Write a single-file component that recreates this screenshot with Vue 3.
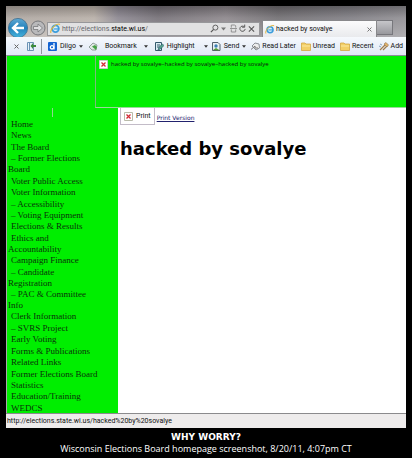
<script setup>
const menu = [
  'Home', 'News', 'The Board', '– Former Elections Board', 'Voter Public Access',
  'Voter Information', '– Accessibility', '– Voting Equipment', 'Elections & Results',
  'Ethics and Accountability', 'Campaign Finance', '– Candidate Registration',
  '– PAC & Committee Info', 'Clerk Information', '– SVRS Project', 'Early Voting',
  'Forms & Publications', 'Related Links', 'Former Elections Board', 'Statistics',
  'Education/Training', 'WEDCS',
]
</script>

<template>
  <figure class="frame">
    <div class="window">
      <div class="chrome">
        <div class="titlebar"></div>
        <div class="nav">
          <button class="back" aria-label="Back">
            <svg viewBox="0 0 22 20" width="22" height="20">
              <defs>
                <linearGradient id="blue" x1="0" y1="0" x2="0" y2="1">
                  <stop offset="0" stop-color="#5fa9d4" />
                  <stop offset=".5" stop-color="#2482bb" />
                  <stop offset="1" stop-color="#46b4dd" />
                </linearGradient>
              </defs>
              <circle cx="11" cy="10" r="9.6" fill="url(#blue)" stroke="#3b6f91" stroke-width=".8" />
              <path d="M17 10H6M11 5L6 10L11 15" fill="none" stroke="#fff" stroke-width="2.4" />
            </svg>
          </button>
          <button class="forward" aria-label="Forward">
            <svg viewBox="0 0 16 16" width="16" height="16">
              <circle cx="8" cy="8" r="7" fill="#b9b9bb" stroke="#77787b" />
              <path d="M3.5 6.5h4.500v-2.500l4.500 4l-4.500 4v-2.500H3.500z" fill="#dedee0" stroke="#77787b" stroke-width=".8" />
            </svg>
          </button>
          <div class="address">
            <svg class="ie" viewBox="0 0 12 12" width="11" height="11">
              <circle cx="6" cy="6.300" r="3.600" fill="#d8eefb" stroke="#3c9ddb" stroke-width="1.900" />
              <path d="M4 6.500h6" stroke="#3c9ddb" stroke-width="1.300" />
              <path d="M1 10.800C-.5 7 7-.5 11 1.500" fill="none" stroke="#e2b53a" stroke-width="1.200" />
            </svg>
            <span class="url">http://elections.<b>state.wi.us</b>/</span>
            <div class="tools">
              <button aria-label="Search">
                <svg viewBox="0 0 10 10" width="9" height="9"><circle cx="6" cy="4" r="2.800" fill="none" stroke="#555" /><path d="M4 6L1 9" stroke="#555" stroke-width="1.400" /></svg>
              </button>
              <button aria-label="Search options">
                <svg viewBox="0 0 5 4" width="5" height="4"><path d="M0 .5h5L2.500 3.500z" fill="#777" /></svg>
              </button>
              <button class="compat" aria-label="Compatibility view">
                <svg viewBox="0 0 8 9" width="7" height="9"><path d="M1.500 3.500V.5h4l1 1v2M1.500 5.500v3h5v-3M0 4.500h8" fill="none" stroke="#888" /></svg>
              </button>
              <button aria-label="Refresh">
                <svg viewBox="0 0 8 9" width="7" height="9"><path d="M6 2.500A3 3 0 1 0 7 5M6.500 0v3h-3" fill="none" stroke="#555" stroke-width="1.100" /></svg>
              </button>
              <button aria-label="Stop">
                <svg viewBox="0 0 8 8" width="7" height="8"><path d="M1 1l6 6M7 1L1 7" stroke="#555" stroke-width="1.200" /></svg>
              </button>
            </div>
          </div>
          <div class="tab">
            <svg class="ie" viewBox="0 0 12 12" width="10" height="11">
              <circle cx="6" cy="6.300" r="3.600" fill="#d8eefb" stroke="#3c9ddb" stroke-width="1.900" />
              <path d="M4 6.500h6" stroke="#3c9ddb" stroke-width="1.300" />
              <path d="M1 10.800C-.5 7 7-.5 11 1.500" fill="none" stroke="#e2b53a" stroke-width="1.200" />
            </svg>
            <span class="tab-title">hacked by sovalye</span>
            <button aria-label="Close tab">
              <svg viewBox="0 0 5 5" width="5" height="5"><path d="M.5 .5l4 4M4.500 .5l-4 4" stroke="#777" /></svg>
            </button>
          </div>
          <button class="new-tab" aria-label="New tab"></button>
        </div>
      </div>

      <div class="toolbar">
        <button class="close" aria-label="Close toolbar">
          <svg viewBox="0 0 5 5" width="5" height="5"><path d="M.5 .5l4 4M4.500 .5l-4 4" stroke="#666" /></svg>
        </button>
        <button class="side" aria-label="Sidebar">
          <svg viewBox="0 0 9 9" width="9" height="9"><path d="M.5 .5h6v8h-6zM2.500 .5v8" fill="#e6f1fb" stroke="#6b93b5" /><path d="M9 3H6V1L3.500 4L6 7V5h3z" fill="#3d8b3b" /></svg>
        </button>
        <button class="diigo">
          <svg viewBox="0 0 9 9" width="9" height="9"><rect width="9" height="9" rx="1" fill="#1464d2" /><circle cx="4" cy="5.300" r="1.700" fill="none" stroke="#fff" stroke-width="1.300" /><path d="M6 1v6.500" stroke="#fff" stroke-width="1.300" /></svg>
          Diigo
          <svg class="arrow" viewBox="0 0 5 3" width="4" height="3"><path d="M0 0h5L2.500 3z" fill="#333" /></svg>
        </button>
        <button class="bookmark">
          <svg viewBox="0 0 10 9" width="10" height="9"><path d="M1 5L5 1L9 3L8 8L4 8z" fill="#e1e9e4" stroke="#7b8d86" stroke-width=".8" /><path d="M4 4.500L7 3l2 2l-1 3z" fill="#45a144" /></svg>
          <span>Bookmark</span>
          <svg class="arrow" viewBox="0 0 5 3" width="4" height="3"><path d="M0 0h5L2.500 3z" fill="#333" /></svg>
        </button>
        <button class="highlight">
          <svg viewBox="0 0 9 9" width="9" height="9"><path d="M.5 .5h6v8h-6z" fill="#d9ecf2" stroke="#33586b" /><path d="M2 3h3M2 5h2" stroke="#33586b" /><path d="M3 8L4 5L7.500 2L9 3.500L5.500 7z" fill="#56a38b" stroke="#28586b" stroke-width=".6" /></svg>
          <span>Highlight</span>
          <svg class="arrow" viewBox="0 0 5 3" width="4" height="3"><path d="M0 0h5L2.500 3z" fill="#333" /></svg>
        </button>
        <button class="send">
          <svg viewBox="0 0 9 9" width="9" height="9"><path d="M.5 .5h5.500l2 2v6H.5z" fill="#e9f0f4" stroke="#53616b" /><circle cx="4" cy="4" r="1.700" fill="#3d80b5" /><path d="M1 8l3-2l4 2.500z" fill="#579b3a" /></svg>
          Send
          <svg class="arrow" viewBox="0 0 5 3" width="4" height="3"><path d="M0 0h5L2.500 3z" fill="#333" /></svg>
        </button>
        <button class="later">
          <svg viewBox="0 0 9 9" width="9" height="9"><path d="M1 4L4 1l4 1l.5 4L5 8z" fill="#eee" stroke="#8b9096" /><path d="M0 7.500L4 4v2h3" fill="none" stroke="#777" /></svg>
          Read Later
        </button>
        <button class="unread">
          <svg viewBox="0 0 10 9" width="10" height="9"><path d="M.5 1h3.500l1 1h4.500v6.500h-9z" fill="#f3cf67" stroke="#d3a744" stroke-width=".8" /><path d="M1 4h8" stroke="#fbe7a1" /></svg>
          Unread
        </button>
        <button class="recent">
          <svg viewBox="0 0 10 9" width="10" height="9"><path d="M.5 1h3.500l1 1h4.500v6.500h-9z" fill="#f3cf67" stroke="#d3a744" stroke-width=".8" /><path d="M1 4h8" stroke="#fbe7a1" /></svg>
          Recent
        </button>
        <button class="add">
          <svg viewBox="0 0 10 9" width="10" height="9"><path d="M1 8L6 3M4 8l4-4" stroke="#a07b4c" stroke-width="1.200" /><path d="M5 2l2-1.500L9.500 3L8 5z" fill="#e2b269" stroke="#8f7350" stroke-width=".6" /><path d="M0 4l2 1M1 2l2 1" stroke="#8aa3bf" /></svg>
          Add
        </button>
      </div>

      <div class="page">
        <header class="banner">
          <div class="banner-image">
            <svg class="broken" viewBox="0 0 9 9" width="9" height="9"><path d="M.5 .5h8v8h-8z" fill="#fff" stroke="#c9c9c9" /><path d="M2.500 2.500l4 4M6.500 2.500l-4 4" stroke="#d42a35" stroke-width="1.300" /></svg>
            <span>hacked by sovalye–hacked by sovalye–hacked by sovalye</span>
          </div>
        </header>
        <div class="columns">
          <nav class="sidebar">
            <div class="tick"></div>
            <ul>
              <li v-for="(item, i) in menu" :key="i"><a href="#">{{ item }}</a></li>
            </ul>
          </nav>
          <main>
            <div class="print">
              <span class="print-image">
                <svg viewBox="0 0 9 9" width="9" height="9"><path d="M.5 .5h8v8h-8z" fill="#fff" stroke="#b9bba9" /><path d="M2.500 2.500l4 4M6.500 2.500l-4 4" stroke="#d42a35" stroke-width="1.300" /></svg>
                Print
              </span>
              <a href="#">Print Version</a>
            </div>
            <h1>hacked by sovalye</h1>
          </main>
        </div>
      </div>

      <footer class="status">http://elections.state.wi.us/hacked%20by%20sovalye</footer>
    </div>
    <figcaption>
      <strong>WHY WORRY?</strong>
      <span>Wisconsin Elections Board homepage screenshot, 8/20/11, 4:07pm CT</span>
    </figcaption>
  </figure>
</template>

<style>
body { background: #000; }
</style>

<style scoped>
* { box-sizing: border-box; }
button {
  display: flex;
  align-items: center;
  padding: 0;
  border: 0;
  background: none;
  font: inherit;
  color: inherit;
}
svg { flex: none; }
.frame {
  display: flex;
  flex-direction: column;
  min-height: 100vh;
  margin: 0;
  padding: 6px 6px 4px;
  background: #000;
  font-family: Roboto, "Open Sans", sans-serif;
  font-size: 7px;
  color: #111;
  white-space: nowrap;
}
.window {
  flex: 1;
  display: flex;
  flex-direction: column;
  background: #fff;
}
.chrome {
  background: linear-gradient(90deg, #a9a19b 0, #b3aaa2 22%, #85808a 28%, #6d686f 38%, #857f84 55%, #69666a 68%, #77757b 85%, #8a888d 100%);
}
.titlebar {
  height: 12px;
  background: linear-gradient(180deg, #0003, #fff2);
}
.nav {
  display: flex;
  align-items: center;
  height: 19px;
  background: linear-gradient(180deg, #fff2, #fff5);
}
.back { margin-left: 1px; }
.forward { margin-left: 1px; }
.address {
  display: flex;
  align-items: center;
  flex: 1;
  height: 14px;
  margin: 2px 2px 0 1px;
  padding: 0 4px 0 2px;
  border: 1px solid #97979a;
  background: #e1e1e2;
}
.url {
  flex: 1;
  margin-left: 1px;
  color: #66666a;
}
.url b { font-weight: 400; color: #000; }
.tools { display: flex; align-items: center; gap: 2px; }
.compat { margin-left: 2px; }
.tab {
  display: flex;
  align-items: center;
  flex: none;
  width: 115px;
  height: 17px;
  margin-top: 2px;
  padding: 0 4px 0 2px;
  border: 1px solid #88888b;
  border-bottom: 0;
  background: linear-gradient(180deg, #fbfbfc, #e9eaed);
}
.tab-title { flex: 1; margin-left: 1px; }
.new-tab {
  width: 16px;
  height: 15px;
  margin-right: 13px;
  border: 1px solid #77777c;
  border-left: 0;
  background: linear-gradient(180deg, #c6c6ca, #98989d);
}
.toolbar {
  display: flex;
  align-items: center;
  height: 18px;
  padding-left: 8px;
  background: linear-gradient(180deg, #f6f9fd, #dfe8f5);
}
.toolbar button { gap: 2px; }
.toolbar .side { margin-left: 8px; }
.toolbar .diigo { gap: 3px; height: 15px; margin-left: 5px; padding-left: 6px; border-left: 1px solid #8f979f; }
.toolbar .bookmark { gap: 7px; margin-left: 5px; }
.toolbar .highlight { gap: 3px; margin-left: 7px; }
.toolbar .highlight .arrow { margin-left: 6px; }
.toolbar .send { gap: 3px; margin-left: 4px; }
.toolbar .later,
.toolbar .unread,
.toolbar .recent,
.toolbar .add { margin-left: 5px; }
.page {
  flex: 1;
  display: flex;
  flex-direction: column;
  border-top: 1px solid #8b8d99;
  border-left: 1px solid #a9aaa9;
}
.banner {
  display: flex;
  height: 52px;
  padding-left: 88px;
  background: #0e0;
}
.banner-image {
  display: flex;
  align-items: start;
  flex: 1;
  gap: 3px;
  padding: 4px 3px;
  border-bottom: 1px solid #9bd99b;
  border-left: 1px solid #7db97d;
  font: 6px/9px "Open Sans", sans-serif;
}
.columns { flex: 1; display: flex; }
.sidebar {
  display: flex;
  flex-direction: column;
  width: 111px;
  background: #0e0;
}
.tick {
  width: 1px;
  height: 9px;
  margin-left: 45px;
  background: #8fd88f;
}
.sidebar ul {
  flex: 1;
  display: flex;
  flex-direction: column;
  justify-content: space-between;
  margin: 0 0 -1px;
  padding: 2px 0 0 1px;
  list-style: none;
  font: 9px/11px "Liberation Serif", serif;
}
.sidebar li { width: 84px; text-indent: 3px; white-space: normal; }
.sidebar li:nth-child(19) { width: 100px; }
.sidebar a { color: #0a320a; text-decoration: none; }
main { flex: 1; padding: 0 2px; }
.print { display: flex; align-items: center; gap: 2px; }
.print-image {
  display: flex;
  align-items: center;
  gap: 3px;
  height: 17px;
  padding: 0 3px;
  border: 1px solid #c3bcc8;
  border-top: 0;
}
.print a { padding-top: 3px; font: 6px/8px "DejaVu Sans", sans-serif; color: #22226e; }
h1 {
  margin: 13px 0 0;
  font: bold 18px/22px "DejaVu Sans", sans-serif;
  color: #000;
}
.status {
  height: 15px;
  padding: 0 1px;
  border-top: 1px solid #8b8b8d;
  background: #eeecec;
  line-height: 15px;
}
figcaption {
  display: flex;
  flex-direction: column;
  align-items: center;
  padding-top: 4px;
  color: #fff;
  font: 9px/11px "Open Sans", sans-serif;
}
figcaption strong { font-family: "DejaVu Sans", sans-serif; }
</style>
